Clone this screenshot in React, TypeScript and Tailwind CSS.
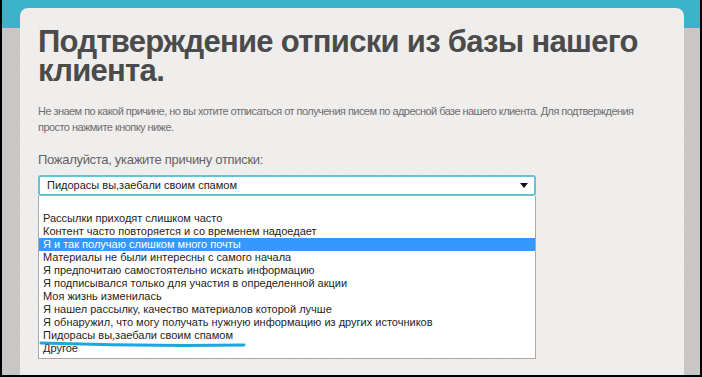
import React from 'react';

const REASONS = [
  '',
  'Рассылки приходят слишком часто',
  'Контент часто повторяется и со временем надоедает',
  'Я и так получаю слишком много почты',
  'Материалы не были интересны с самого начала',
  'Я предпочитаю самостоятельно искать информацию',
  'Я подписывался только для участия в определенной акции',
  'Моя жизнь изменилась',
  'Я нашел рассылку, качество материалов которой лучше',
  'Я обнаружил, что могу получать нужную информацию из других источников',
  'Пидорасы вы,заебали своим спамом',
  'Другое',
];

const HIGHLIGHTED = 3;

export default function App() {
  return (
    <div className="w-[702px] h-[377px] overflow-hidden border-x-2 border-b-2 border-black bg-[linear-gradient(#3cb3c9_0,#3cb3c9_28px,#c9c7c5_28px)] font-['Liberation_Sans',Arial,sans-serif]">
      <div className="mt-[8px] ml-[18px] mr-[16px] h-[400px] rounded-t-[8px] bg-[#efeeed] bg-[repeating-linear-gradient(45deg,#f0efee_0,#f0efee_2px,#ecebea_2px,#ecebea_3px)] pt-[19px] px-[18px]">
        <h1 className="text-[31px] leading-[29px] font-bold text-[#4b4b4b] tracking-[-0.7px]">
          Подтверждение отписки из базы нашего клиента.
        </h1>

        <p className="mt-[18px] text-[11px] leading-[16px] text-[#6e6e6e] tracking-[-0.55px]">
          Не знаем по какой причине, но вы хотите отписаться от получения писем по адресной базе нашего клиента. Для подтверждения просто нажмите кнопку ниже.
        </p>

        <label className="block mt-[15px] text-[13px] leading-[20px] text-[#636363] tracking-[-0.3px]">
          Пожалуйста, укажите причину отписки:
        </label>

        <div className="relative mt-[5px] w-[498px]">
          <div className="flex items-center justify-between h-[21px] rounded-[3px] border-2 border-[#62c4d4] bg-white pl-[7px] pr-[6px] text-[11px] text-[#222]">
            <span>Пидорасы вы,заебали своим спамом</span>
            <svg width="8" height="5" viewBox="0 0 8 5">
              <path d="M0 0h8L4 5z" fill="#111" />
            </svg>
          </div>

          <ul className="border border-t-0 border-[#a9a9a9] bg-white pt-[3px] pb-[3px] text-[11px] leading-[13px] text-[#1e1e1e]">
            {REASONS.map((r, i) => (
              <li
                key={i}
                className={
                  i === HIGHLIGHTED
                    ? 'h-[13px] pl-[4px] bg-[#3399ff] text-white'
                    : 'h-[13px] pl-[4px]'
                }
              >
                {r}
              </li>
            ))}
          </ul>

          {/* marker underline */}
          <svg className="absolute left-[1px] top-[165px]" width="210" height="8" viewBox="0 0 210 8">
            <path d="M2 3 C 60 5, 140 6, 205 5" stroke="#1ca6df" strokeWidth="3" strokeLinecap="round" fill="none" />
          </svg>
        </div>
      </div>
    </div>
  );
}
